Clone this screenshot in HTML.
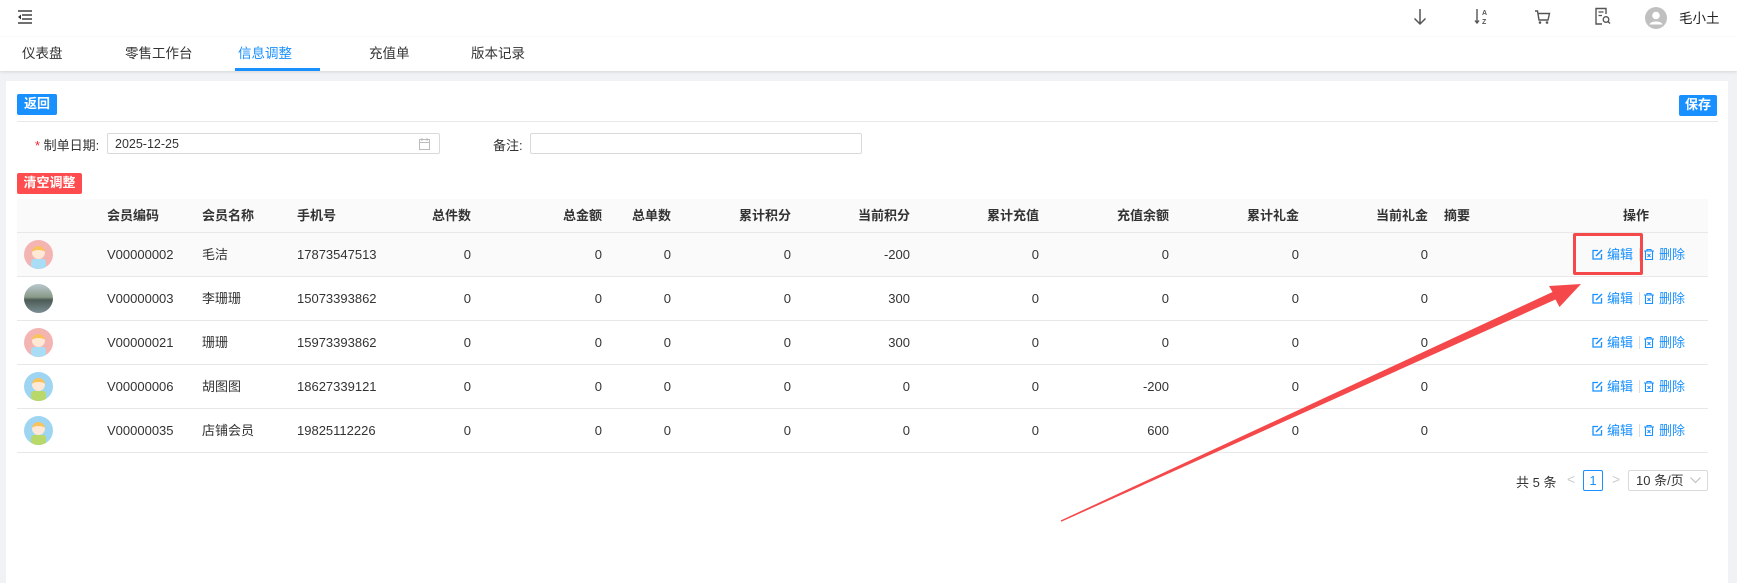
<!DOCTYPE html>
<html><head><meta charset="utf-8"><style>
*{margin:0;padding:0;box-sizing:border-box}
body{width:1737px;height:583px;overflow:hidden;background:#f0f2f5;font-family:"Liberation Sans","Noto Sans CJK SC",sans-serif;font-size:13px;color:#333;position:relative}
.abs{position:absolute}
.top{left:0;top:0;width:1737px;height:37px;background:#fff}
.tabs{left:0;top:37px;width:1737px;height:34px;background:#fff;box-shadow:0 1px 3px rgba(0,0,0,.12)}
.tab{position:absolute;top:9px;font-size:13.5px;color:#333;line-height:16px}
.card{left:6px;top:81px;width:1722px;height:502px;background:#fff}
.btn{position:absolute;color:#fff;font-weight:bold;font-size:13px;line-height:20px;text-align:center;border-radius:2px}
.input{position:absolute;border:1px solid #d9d9d9;border-radius:2px;height:21px;background:#fff}
.row{position:absolute;left:17px;width:1691px;border-bottom:1px solid #e8e8e8}
.c{position:absolute;top:0;white-space:nowrap}
.r{text-align:right}
.av{position:absolute;left:7px;width:29px;height:29px;border-radius:50%;overflow:hidden}
.act{position:absolute;color:#1890ff;font-size:13px}
</style></head><body>
<div class="abs top">
 <svg class="abs" style="left:17px;top:10px" width="15" height="14" viewBox="0 0 15 14"><g stroke="#333" stroke-width="1.4"><line x1="1" y1="1" x2="15" y2="1"/><line x1="5" y1="5" x2="15" y2="5"/><line x1="5" y1="9" x2="15" y2="9"/><line x1="1" y1="13" x2="15" y2="13"/></g><path d="M1 7 L4 4.5 L4 9.5Z" fill="#333"/></svg>
 <svg class="abs" style="left:1413px;top:8px" width="14" height="18" viewBox="0 0 14 18"><path d="M7 1V16M1.5 10.5L7 16L12.5 10.5" stroke="#555" stroke-width="1.5" fill="none"/></svg>
 <svg class="abs" style="left:1474px;top:7px" width="16" height="20" viewBox="0 0 16 20"><path d="M3 2V16M1 13.5L3 16L5 13.5" stroke="#555" stroke-width="1.4" fill="none"/><text x="8" y="8" font-size="7" font-family="Liberation Sans" font-weight="bold" fill="#555">A</text><text x="8" y="17" font-size="7" font-family="Liberation Sans" font-weight="bold" fill="#555">Z</text></svg>
 <svg class="abs" style="left:1534px;top:9px" width="17" height="16" viewBox="0 0 17 16"><path d="M1 2H3.5L5 11H14L15.5 4.5H4" stroke="#555" stroke-width="1.4" fill="none"/><circle cx="6" cy="13.5" r="1.3" fill="#555"/><circle cx="13" cy="13.5" r="1.3" fill="#555"/></svg>
 <svg class="abs" style="left:1594px;top:7px" width="17" height="19" viewBox="0 0 17 19"><path d="M12 7V1.5H2V17H8" stroke="#555" stroke-width="1.4" fill="none"/><line x1="4.5" y1="5" x2="9.5" y2="5" stroke="#555" stroke-width="1.3"/><line x1="4.5" y1="8.5" x2="8" y2="8.5" stroke="#555" stroke-width="1.3"/><circle cx="12" cy="12.5" r="2.8" stroke="#555" stroke-width="1.3" fill="none"/><line x1="14" y1="14.5" x2="16" y2="16.5" stroke="#555" stroke-width="1.4"/></svg>
 <svg class="abs" style="left:1645px;top:7px" width="22" height="22" viewBox="0 0 22 22"><circle cx="11" cy="11" r="11" fill="#c0c0c0"/><circle cx="11" cy="8.5" r="3.8" fill="#fff"/><path d="M4.5 17.5C5.5 13.5 16.5 13.5 17.5 17.5Z" fill="#fff"/></svg>
 <div class="abs" style="left:1679px;top:7px;font-size:13.5px;color:#222">毛小土</div>
</div>
<div class="abs tabs">
 <div class="tab" style="left:22px">仪表盘</div>
 <div class="tab" style="left:125px">零售工作台</div>
 <div class="tab" style="left:238px;color:#1890ff">信息调整</div>
 <div class="abs" style="left:235px;top:31px;width:85px;height:3px;background:#1890ff"></div>
 <div class="tab" style="left:369px">充值单</div>
 <div class="tab" style="left:471px">版本记录</div>
</div>
<div class="abs card"></div>
<div class="btn" style="left:17px;top:94px;width:40px;height:21px;background:#1890ff">返回</div>
<div class="btn" style="left:1679px;top:95px;width:38px;height:21px;background:#1890ff">保存</div>
<div class="abs" style="left:17px;top:121px;width:1701px;height:1px;background:#e8e8e8"></div>
<div class="abs" style="left:35px;top:135px"><span style="color:#f5222d">*</span> 制单日期:</div>
<div class="input" style="left:107px;top:133px;width:333px"><span class="abs" style="left:7px;top:3px;font-size:12.5px">2025-12-25</span>
 <svg class="abs" style="right:9px;top:4px" width="11" height="12" viewBox="0 0 11 12"><rect x="0.5" y="1.5" width="10" height="10" fill="none" stroke="#bbb"/><line x1="0.5" y1="4.5" x2="10.5" y2="4.5" stroke="#bbb"/><line x1="3" y1="0" x2="3" y2="3" stroke="#bbb"/><line x1="8" y1="0" x2="8" y2="3" stroke="#bbb"/></svg></div>
<div class="abs" style="left:493px;top:135px">备注:</div>
<div class="input" style="left:530px;top:133px;width:332px"></div>
<div class="btn" style="left:17px;top:173px;width:65px;height:21px;background:#ff4d4f">清空调整</div>

<div class="row" style="top:199px;height:34px;background:#fafafa;font-weight:bold;line-height:33px">
 <span class="c" style="left:90px">会员编码</span><span class="c" style="left:185px">会员名称</span><span class="c" style="left:280px">手机号</span>
 <span class="c r" style="right:1237px">总件数</span><span class="c r" style="right:1106px">总金额</span><span class="c r" style="right:1037px">总单数</span>
 <span class="c r" style="right:917px">累计积分</span><span class="c r" style="right:798px">当前积分</span><span class="c r" style="right:669px">累计充值</span>
 <span class="c r" style="right:539px">充值余额</span><span class="c r" style="right:409px">累计礼金</span><span class="c r" style="right:280px">当前礼金</span>
 <span class="c" style="left:1427px">摘要</span><span class="c" style="left:1606px">操作</span>
</div>

<div id="rows"></div>
<script>
var d=[["V00000002","毛洁","17873547513","-200","0","p"],["V00000003","李珊珊","15073393862","300","0","photo"],["V00000021","珊珊","15973393862","300","0","p"],["V00000006","胡图图","18627339121","0","-200","b"],["V00000035","店铺会员","19825112226","0","600","b"]];
var h="";
d.forEach(function(r,i){
 var top=233+i*44;
 var av;
 if(r[5]=="photo") av='<div class="av" style="top:7px;background:linear-gradient(180deg,#b9c7cf 0%,#8a9a88 45%,#4b5b55 55%,#7d8f95 100%)"></div>';
 else { var bg=r[5]=="p"?"#f4b4b2":"#9ed5f2"; var sh=r[5]=="p"?"#a9dcf5":"#b9d86a";
  av='<div class="av" style="top:7px;background:'+bg+'"><div class="abs" style="left:8px;top:6px;width:13px;height:13px;border-radius:50%;background:#ffe8d6;border-top:4px solid #f8c35a"></div><div class="abs" style="left:7px;top:19px;width:15px;height:10px;background:'+sh+';border-radius:3px 3px 0 0"></div></div>'; }
 h+='<div class="row" style="top:'+top+'px;height:44px;line-height:43px;'+(i==0?'background:#fafafa':'')+'">'+av+
 '<span class="c" style="left:90px">'+r[0]+'</span><span class="c" style="left:185px">'+r[1]+'</span><span class="c" style="left:280px">'+r[2]+'</span>'+
 '<span class="c r" style="right:1237px">0</span><span class="c r" style="right:1106px">0</span><span class="c r" style="right:1037px">0</span><span class="c r" style="right:917px">0</span>'+
 '<span class="c r" style="right:798px">'+r[3]+'</span><span class="c r" style="right:669px">0</span><span class="c r" style="right:539px">'+r[4]+'</span>'+
 '<span class="c r" style="right:409px">0</span><span class="c r" style="right:280px">0</span>'+
 '<svg class="abs" style="left:1575px;top:16px" width="11" height="11" viewBox="0 0 11 11"><path d="M6 1.5H1V10H9.5V5" stroke="#1890ff" stroke-width="1.3" fill="none"/><path d="M4 7L10 1" stroke="#1890ff" stroke-width="1.5"/></svg>'+
 '<span class="act" style="left:1590px;top:0">编辑</span><span class="abs" style="left:1622px;top:15px;width:1px;height:13px;background:#ddd"></span>'+
 '<svg class="abs" style="left:1627px;top:16px" width="10" height="11" viewBox="0 0 10 11"><path d="M0 2H10M3 2V0.5H7V2M1.5 2V10.5H8.5V2" stroke="#1890ff" stroke-width="1.1" fill="none"/><path d="M3.5 5L6.5 8M6.5 5L3.5 8" stroke="#1890ff" stroke-width="1"/></svg>'+
 '<span class="act" style="left:1642px;top:0">删除</span></div>';
});
document.getElementById("rows").innerHTML=h;
</script>

<div class="abs" style="left:1516px;top:472px">共 5 条</div>
<div class="abs" style="left:1567px;top:471px;color:#ccc;font-size:14px">&lt;</div>
<div class="abs" style="left:1583px;top:470px;width:20px;height:21px;border:1px solid #1890ff;border-radius:2px;color:#1890ff;text-align:center;line-height:19px">1</div>
<div class="abs" style="left:1612px;top:471px;color:#ccc;font-size:14px">&gt;</div>
<div class="abs" style="left:1628px;top:470px;width:80px;height:21px;border:1px solid #d9d9d9;border-radius:2px;line-height:19px;padding-left:7px">10 条/页
 <svg class="abs" style="right:6px;top:6px" width="11" height="7" viewBox="0 0 11 7"><path d="M0.5 0.5L5.5 5.5L10.5 0.5" stroke="#bbb" fill="none"/></svg></div>

<div class="abs" style="left:1573px;top:233px;width:70px;height:42px;border:3px solid #f5484a;border-radius:2px"></div>
<svg class="abs" style="left:0;top:0" width="1737" height="583"><polygon points="1061.2,521.8 1555.5,299.5 1559.5,307 1581,284 1549,286 1552.5,292 1060.8,520.4" fill="#f5484a"/></svg>
</body></html>
